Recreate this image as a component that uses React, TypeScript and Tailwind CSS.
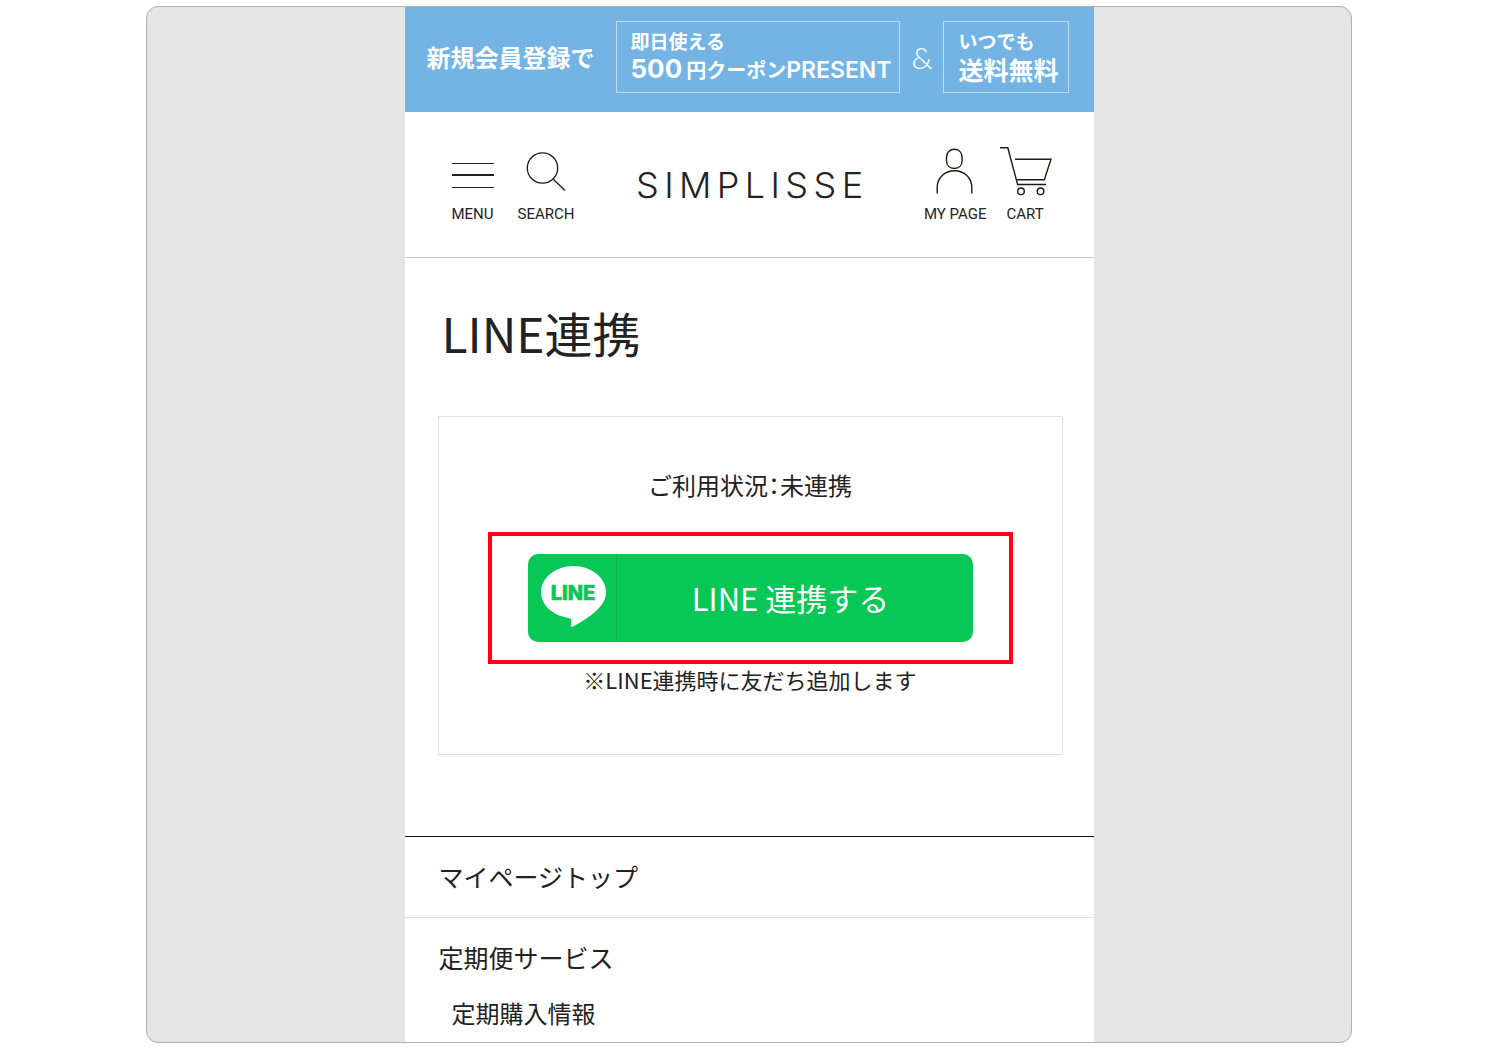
import React from "react";

function MenuIcon() {
  return (
    <svg width="42" height="52" viewBox="0 0 42 52" fill="none" stroke="#222222" aria-hidden="true">
      <path d="M0 17.5H42M0 41.5H42" />
      <path d="M0 29H42" strokeWidth="2" />
    </svg>
  );
}

function SearchIcon() {
  return (
    <svg width="40" height="52" viewBox="0 0 40 52" fill="none" stroke="#231815" strokeWidth="1.3" aria-hidden="true">
      <circle cx="16.5" cy="22" r="15.2" />
      <path d="M27.3 33.2L39 44.5" />
    </svg>
  );
}

function PersonIcon() {
  return (
    <svg width="38" height="52" viewBox="0 0 38 52" fill="none" stroke="#231815" strokeWidth="1.4" aria-hidden="true">
      <path d="M10.5 11.5C10.5 6.3 13.9 3.3 18.3 3.3S26.1 6.3 26.1 11.5V14.5C26.1 19.4 22.9 22.5 18.3 22.5S10.5 19.4 10.5 14.5Z" />
      <path d="M1.2 47.5V41.5C1.2 31.8 8.7 24.8 18.5 24.8S35.8 31.8 35.8 41.5V47.5" />
    </svg>
  );
}

function CartIcon() {
  return (
    <svg width="53" height="52" viewBox="0 0 53 52" fill="none" stroke="#231815" strokeWidth="1.4" aria-hidden="true">
      <path d="M1 1.8H8.8L18.6 38.5H47" />
      <path d="M16 13.3H52L45.3 33.7H17.5" />
      <circle cx="22" cy="45.3" r="3.3" />
      <circle cx="41.5" cy="45.3" r="3.3" />
    </svg>
  );
}

function LineLogo() {
  return (
    <svg width="65" height="61" viewBox="0 0 65 61" aria-hidden="true">
      <path
        fill="#ffffff"
        d="M32.5 0C14.6 0 0 11.7 0 26.1C0 39 11.6 49.8 27.2 51.9C30 52.4 30.6 53.4 30.3 55.6L29.8 59C29.6 60.6 30.6 61.3 32.3 60.4C37.5 57.8 51.5 49.6 58.7 41.3C63 36.6 65 31.7 65 26.1C65 11.7 50.4 0 32.5 0Z"
      />
      <text
        x="32"
        y="34"
        textAnchor="middle"
        fill="#07c755"
        stroke="#07c755"
        strokeWidth="0.6"
        className="font-['Inter',sans-serif] text-[20px] font-extrabold"
      >
        LINE
      </text>
    </svg>
  );
}

function HeaderButton({ label, children }: { label: string; children: React.ReactNode }) {
  return (
    <button type="button" className="flex flex-col items-center gap-1.5 font-['Roboto',sans-serif] text-[15px] leading-5">
      {children}
      <span>{label}</span>
    </button>
  );
}

function Banner() {
  return (
    <a href="#coupon" className="flex items-start justify-between bg-[#73b4e5] pt-3.5 pr-6 pb-[19px] pl-[22px] text-white">
      <span className="mr-2.5 pt-[18px] text-2xl leading-9 font-bold">新規会員登録で</span>
      <span className="flex flex-col border border-[#b9def0] pt-[7px] pr-2 pb-1.5 pl-3.5">
        <span className="text-[19px] leading-6 font-bold">即日使える</span>
        <span className="flex items-baseline leading-8 font-bold">
          <span className="mr-1 font-['Inter',sans-serif] text-[26px]">500</span>
          <span className="text-xl">円クーポン</span>
          <span className="font-['Inter',sans-serif] text-[23px] font-semibold">PRESENT</span>
        </span>
      </span>
      <span className="pt-[18px] font-['Lato',sans-serif] text-3xl leading-9 font-light">&amp;</span>
      <span className="flex flex-col border border-[#b9def0] pt-[7px] pr-2.5 pb-[7px] pl-3.5">
        <span className="text-[19px] leading-6 font-bold">いつでも</span>
        <span className="text-[25px] leading-8 font-bold">送料無料</span>
      </span>
    </a>
  );
}

function Header() {
  return (
    <header className="flex items-start justify-between border-b border-[#c9cccb] pt-[34px] pr-[42px] pb-[33px] pl-[47px]">
      <div className="flex gap-6">
        <HeaderButton label="MENU">
          <MenuIcon />
        </HeaderButton>
        <HeaderButton label="SEARCH">
          <SearchIcon />
        </HeaderButton>
      </div>
      <a href="#top" className="pt-[19px] pl-1.5 font-['Inter',sans-serif] text-4xl leading-10 font-light tracking-[0.15em]">
        SIMPLISSE
      </a>
      <div className="flex gap-3">
        <HeaderButton label="MY PAGE">
          <PersonIcon />
        </HeaderButton>
        <HeaderButton label="CART">
          <CartIcon />
        </HeaderButton>
      </div>
    </header>
  );
}

export default function App() {
  return (
    <div className="bg-white py-1.5 pr-0.5 font-['Noto_Sans_CJK_JP',sans-serif] text-[#222222]">
      <div className="mx-auto max-w-[1206px] overflow-hidden rounded-xl border border-[#b0b0b0] bg-[#e5e5e5]">
        <div className="mx-auto max-w-[689px] bg-white">
          <Banner />
          <Header />
          <main className="pt-[38px] pr-[31px] pb-[81px] pl-[33px]">
            <h1 className="pl-1 text-5xl leading-[72px]">LINE連携</h1>
            <section className="mt-12 border border-[#e1e1e1] px-[49px] pt-[50px] pb-[60px] text-center">
              <p className="text-2xl leading-9">
                ご利用状況<span className="[font-feature-settings:'halt']">：</span>未連携
              </p>
              <div className="mt-[29px] border-4 border-[#ff0014] px-9 py-[18px]">
                <button type="button" className="flex w-full items-stretch rounded-[10px] bg-[#07c755] text-white">
                  <span className="border-r border-[#06b34c] pt-3 pr-[10px] pb-[15px] pl-[13px]">
                    <LineLogo />
                  </span>
                  <span className="flex flex-1 items-center justify-center pr-2 text-[31px]">LINE 連携する</span>
                </button>
              </div>
              <p className="text-[22px] leading-[30px]">※LINE連携時に友だち追加します</p>
            </section>
          </main>
          <nav className="border-t border-[#111111]">
            <a href="#mypage" className="block border-b border-[#e1e1e1] px-[34px] pt-[21px] pb-[23px] text-[25px] leading-9">
              マイページトップ
            </a>
            <a href="#subscription" className="block px-[34px] pt-[21px] text-[25px] leading-9">
              定期便サービス
            </a>
            <a href="#orders" className="block px-[47px] pt-5 pb-[11px] text-2xl leading-9">
              定期購入情報
            </a>
          </nav>
        </div>
      </div>
    </div>
  );
}
